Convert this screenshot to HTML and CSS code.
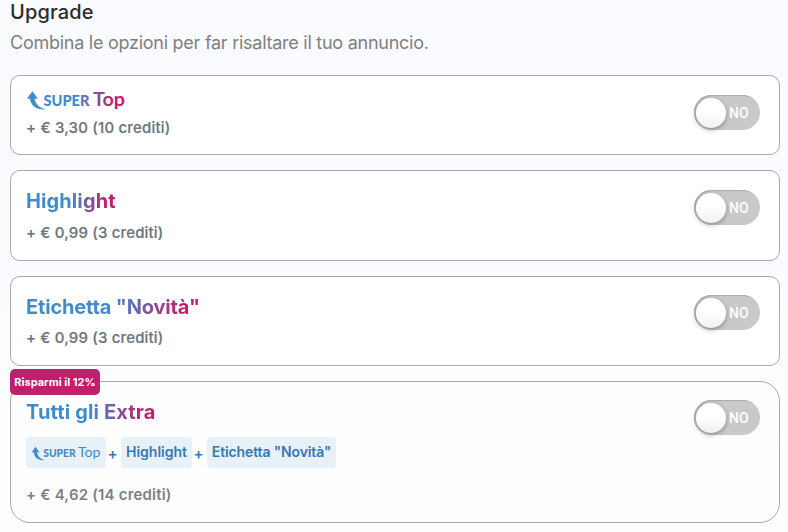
FILE: index.html
```html
<!DOCTYPE html>
<html lang="it">
<head>
    <meta charset="UTF-8">
    <meta name="viewport" content="width=device-width, initial-scale=1.0">
    <title>Upgrade</title>
    <link rel="stylesheet" href="styles.css">
</head>
<body>
    <div class="upgrade">
        <h1>Upgrade</h1>
        <p class="intro">Combina le opzioni per far risaltare il tuo annuncio.</p>

        <div class="option option-top">
            <div class="option-body">
                <svg class="logo" width="104" height="22" viewBox="0 0 104 22" role="img" aria-label="Super Top">
                    <defs>
                        <linearGradient id="brand" gradientUnits="userSpaceOnUse" x1="0" y1="0" x2="99" y2="0">
                            <stop offset="0.5" stop-color="#428bca"/>
                            <stop offset="0.9" stop-color="#be206b"/>
                        </linearGradient>
                    </defs>
                    <g fill="url(#brand)">
                        <path d="M6.5 1.2L0.8 8.8L4 8.6C4.4 14.5 9.5 20.4 19.5 19.3C13.5 18 9.4 14.2 8.6 8.6L12 8.8Z"/>
                        <text class="logo-super" x="17.5" y="15.8" textLength="46" lengthAdjust="spacingAndGlyphs">SUPER</text>
                        <text class="logo-name" x="67" y="15.8" textLength="32" lengthAdjust="spacingAndGlyphs">Top</text>
                    </g>
                </svg>
                <div class="price">+ € 3,30 (10 crediti)</div>
            </div>
            <button class="switch" type="button"><span class="knob"></span>NO</button>
        </div>

        <div class="option">
            <div class="option-body">
                <h2 class="title-highlight">Highlight</h2>
                <div class="price">+ € 0,99 (3 crediti)</div>
            </div>
            <button class="switch" type="button"><span class="knob"></span>NO</button>
        </div>

        <div class="option option-label">
            <div class="option-body">
                <h2 class="title-label">Etichetta "Novità"</h2>
                <div class="price">+ € 0,99 (3 crediti)</div>
            </div>
            <button class="switch" type="button"><span class="knob"></span>NO</button>
        </div>

        <div class="option option-all">
            <span class="badge">Risparmi il 12%</span>
            <div class="option-body">
                <h2 class="title-all">Tutti gli Extra</h2>
                <div class="bundle">
                    <span class="tag tag-logo">
                        <svg class="logo" width="73" height="16" viewBox="0 0 104 22" preserveAspectRatio="none" fill="#428bca" role="img" aria-label="Super Top">
                            <path d="M6.5 1.2L0.8 8.8L4 8.6C4.4 14.5 9.5 20.4 19.5 19.3C13.5 18 9.4 14.2 8.6 8.6L12 8.8Z"/>
                            <text class="logo-super" x="17.5" y="15.8" textLength="46" lengthAdjust="spacingAndGlyphs">SUPER</text>
                            <text class="logo-name logo-light" x="67" y="15.8" textLength="32" lengthAdjust="spacingAndGlyphs">Top</text>
                        </svg>
                    </span>
                    <span class="plus">+</span>
                    <span class="tag tag-highlight">Highlight</span>
                    <span class="plus">+</span>
                    <span class="tag tag-label">Etichetta "Novità"</span>
                </div>
                <div class="price">+ € 4,62 (14 crediti)</div>
            </div>
            <button class="switch" type="button"><span class="knob"></span>NO</button>
        </div>
    </div>
</body>
</html>
```

FILE: styles.css
```css
* {
    margin: 0;
    padding: 0;
    box-sizing: border-box;
}

body {
    font-family: Inter, sans-serif;
    background: linear-gradient(#f9fbfe, #fbfcff 55%, #fefefe 85%);
    color: #333;
    height: 532px;
    overflow: hidden;
}

.upgrade {
    padding: 0 8px 0 10px;
}

h1 {
    font-size: 20px;
    font-weight: 500;
    line-height: 24px;
    letter-spacing: 0.15px;
    color: #2b2b2b;
}

.intro {
    font-size: 18px;
    line-height: 26px;
    letter-spacing: -0.26px;
    color: #808080;
    margin: 6px 0 19px;
}

.option {
    position: relative;
    display: flex;
    justify-content: space-between;
    align-items: flex-start;
    height: 91px;
    margin-bottom: 15px;
    padding: 18px 19px 0 15px;
    border: 1px solid #aaa;
    border-radius: 10px;
    background-color: #fff;
}

.option-top {
    height: 80px;
    padding-top: 14px;
}

.option-label {
    height: 90px;
}

.option-all {
    height: 142px;
    margin-bottom: 0;
    border-radius: 20px;
    background-color: #fefefe;
}

.logo {
    display: block;
    overflow: visible;
}

.logo-super {
    font: 900 15.5px Lato, sans-serif;
}

.logo-name {
    font: 700 19.5px Lato, sans-serif;
}

.logo-light {
    font-weight: 400;
}

h2 {
    width: max-content;
    font-size: 20px;
    font-weight: 650;
    line-height: 24px;
    background: linear-gradient(90deg, #428bca 50%, #be206b 90%);
    -webkit-background-clip: text;
    background-clip: text;
    color: transparent;
}

.title-highlight {
    letter-spacing: 0.1px;
}

.title-label {
    letter-spacing: -0.16px;
}

.title-all {
    letter-spacing: 0.14px;
}

.price {
    font-size: 15px;
    font-weight: 500;
    line-height: 20px;
    letter-spacing: 0.17px;
    color: #6c757d;
    -webkit-text-stroke: 0.2px #6c757d;
    margin-top: 10px;
}

.option-top .price {
    margin-top: 6px;
    letter-spacing: 0.2px;
}

.option-label .price {
    margin-top: 9px;
}

.option-all .price {
    margin-top: 17px;
    font-weight: 600;
    letter-spacing: 0.2px;
    color: #808080;
    -webkit-text-stroke: 0;
}

.switch {
    display: flex;
    align-items: center;
    width: 66px;
    height: 35px;
    margin-top: 1px;
    padding: 2px;
    border: 0;
    border-radius: 18px;
    background-color: #c9c9c9;
    box-shadow: inset 1px 1px 1px #aaa;
    color: #fff;
    font: 500 14px/1 Roboto, sans-serif;
}

.option-top .switch {
    margin-top: 5px;
}

.option-label .switch,
.option-all .switch {
    margin-top: 0;
}

.knob {
    width: 30px;
    height: 30px;
    margin-right: 3px;
    border-radius: 50%;
    background: linear-gradient(#fff 45%, #f0f0f0);
    box-shadow: 0 2px 5px rgba(0, 0, 0, 0.3);
}

.badge {
    position: absolute;
    top: -13px;
    left: -1px;
    width: 90px;
    height: 26px;
    border-radius: 5px;
    background-color: #be206b;
    color: #fff;
    font-size: 11px;
    font-weight: 700;
    line-height: 26px;
    text-align: center;
    white-space: nowrap;
}

.bundle {
    display: flex;
    align-items: center;
    height: 31px;
    margin-top: 13px;
}

.tag {
    display: flex;
    align-items: center;
    justify-content: center;
    height: 31px;
    padding-bottom: 2px;
    border-radius: 4px;
    background-color: #e8f0f8;
    color: #337ab7;
    font-size: 14px;
    font-weight: 600;
    white-space: nowrap;
}

.tag-logo {
    width: 80px;
    padding: 2px 0 0 2px;
}

.tag-highlight {
    width: 71px;
}

.tag-label {
    width: 129px;
    letter-spacing: -0.12px;
}

.plus {
    width: 15px;
    padding: 2px 2px 0 0;
    color: #337ab7;
    font-size: 15px;
    font-weight: 600;
    text-align: center;
}
```
